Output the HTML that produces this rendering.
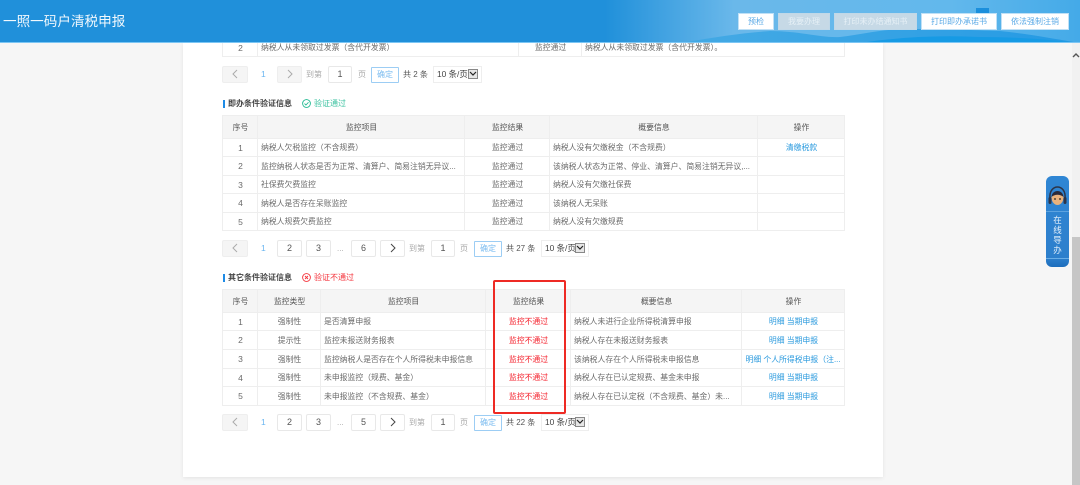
<!DOCTYPE html>
<html lang="zh-CN">
<head>
<meta charset="utf-8">
<title>一照一码户清税申报</title>
<style>
*{box-sizing:border-box}
html,body{margin:0;padding:0;width:1080px;height:485px;overflow:hidden;background:#f6f6f6}
body{position:relative;font-family:"Liberation Sans","Noto Sans CJK SC",sans-serif;font-size:8px;color:#666}
body>*{filter:blur(.3px)}
.a{position:absolute}
#panel{left:183px;top:43px;width:700px;height:434px;background:#fff;box-shadow:0 1px 4px rgba(0,0,0,.08)}
#head{left:0;top:0;width:1080px;height:43px;overflow:hidden;border-bottom:1px solid #7cc6f4}
#title{left:3px;top:13px;font-size:13.6px;line-height:18px;color:#f1f8fd;white-space:nowrap}
.btn{top:13px;height:17px;background:#fff;border:1px solid #bfe0f6;color:#5aa9e6;font-size:8px;line-height:15px;text-align:center;white-space:nowrap}
.btn.d{background:#c6d9e6;border-color:#c0d8e8;color:#e6f0f6}
table{position:absolute;left:222px;width:622px;border-collapse:collapse;table-layout:fixed;background:#fff}
td,th{border:1px solid #eeeeee;padding:0 2px 0 3px;font-weight:normal;text-align:center;white-space:nowrap;overflow:hidden;color:#6a6a6a;font-size:7.85px}
th{background:#f5f5f5;color:#555}
td.l{text-align:left}
td.r{color:#f4222d}
td.o{color:#2a9ade}
.n{font-size:8.5px}
.pg{top:0;height:17px;background:#fff;border:1px solid #e8e8e8;border-radius:2px;text-align:center;line-height:15px;font-size:9px;color:#555}
.pg.x{background:#f5f5f5;border-color:#eeeeee;color:#aaa}
.t{white-space:nowrap;font-size:8px;line-height:17px;top:0}
.g{color:#aaa}
.cur{color:#6ab6f0;font-size:8.5px}
.ok{height:16px;top:1px;border:1px solid #9ccdf4;background:#fff;color:#7dbdf0;font-size:8px;line-height:14px;text-align:center;border-radius:1px}
.sel{top:0;height:17px;background:#fff;border:1px solid #eeeeee;font-size:8.4px;line-height:15px;padding-left:3px;color:#444;white-space:nowrap}
.sel i{position:absolute;right:3px;top:2px;width:10px;height:10px;background:#e6e6e6;border:1px solid #888}
.sel svg{position:absolute;left:0;top:1px}
.pager{left:0;width:1080px;height:17px}
.sec{white-space:nowrap;font-size:8px;line-height:12px;font-weight:bold;color:#444}
.bar{width:2px;height:8px;background:#1e8be6}
</style>
</head>
<body>
<div class="a" id="panel"></div>

<table style="top:38px;height:19px">
<colgroup><col style="width:35px"><col style="width:261px"><col style="width:63px"><col style="width:263px"></colgroup>
<tr><td class="n">2</td><td class="l">纳税人从未领取过发票（含代开发票）</td><td>监控通过</td><td class="l">纳税人从未领取过发票（含代开发票）。</td></tr>
</table>

<div class="a pager" style="top:66px">
<div class="a pg x" style="left:222px;width:26px"><svg width="8" height="10" viewBox="0 0 8 10" style="margin-top:2px"><path d="M6 1L2 5l4 4" fill="none" stroke="#aaa"/></svg></div>
<div class="a t cur" style="left:261px">1</div>
<div class="a pg x" style="left:277px;width:25px"><svg width="8" height="10" viewBox="0 0 8 10" style="margin-top:2px"><path d="M2 1l4 4-4 4" fill="none" stroke="#aaa"/></svg></div>
<div class="a t g" style="left:306px">到第</div>
<div class="a pg" style="left:328px;width:24px">1</div>
<div class="a t g" style="left:358px">页</div>
<div class="a ok" style="left:371px;width:28px">确定</div>
<div class="a t" style="left:403px;color:#555">共 2 条</div>
<div class="a sel" style="left:433px;width:49px">10 条/页<i><svg width="8" height="6" viewBox="0 0 8 6"><path d="M1 1l3 3 3-3" fill="none" stroke="#222" stroke-width="1.2"/></svg></i></div>
</div>

<div class="a bar" style="left:223px;top:100px"></div>
<div class="a sec" style="left:228px;top:98px">即办条件验证信息</div>
<svg class="a" style="left:302px;top:99px" width="9" height="9" viewBox="0 0 9 9"><circle cx="4.5" cy="4.5" r="3.9" fill="none" stroke="#1fb88f" stroke-width=".9"/><path d="M2.5 4.6l1.400 1.400 2.600-2.700" fill="none" stroke="#1fb88f" stroke-width=".9"/></svg>
<div class="a" style="left:314px;top:98px;line-height:12px;font-size:8px;color:#3cc2a0;white-space:nowrap">验证通过</div>

<table style="top:115px;height:115px">
<colgroup><col style="width:35px"><col style="width:207px"><col style="width:85px"><col style="width:208px"><col style="width:87px"></colgroup>
<tr style="height:23px"><th>序号</th><th>监控项目</th><th>监控结果</th><th>概要信息</th><th>操作</th></tr>
<tr style="height:18px"><td class="n">1</td><td class="l">纳税人欠税监控（不含规费）</td><td>监控通过</td><td class="l">纳税人没有欠缴税金（不含规费）</td><td class="o">清缴税款</td></tr>
<tr style="height:19px"><td class="n">2</td><td class="l">监控纳税人状态是否为正常、清算户、简易注销无异议...</td><td>监控通过</td><td class="l">该纳税人状态为正常、停业、清算户、简易注销无异议,...</td><td></td></tr>
<tr style="height:18px"><td class="n">3</td><td class="l">社保费欠费监控</td><td>监控通过</td><td class="l">纳税人没有欠缴社保费</td><td></td></tr>
<tr style="height:19px"><td class="n">4</td><td class="l">纳税人是否存在呆账监控</td><td>监控通过</td><td class="l">该纳税人无呆账</td><td></td></tr>
<tr style="height:18px"><td class="n">5</td><td class="l">纳税人规费欠费监控</td><td>监控通过</td><td class="l">纳税人没有欠缴规费</td><td></td></tr>
</table>

<div class="a pager" style="top:240px">
<div class="a pg x" style="left:222px;width:26px"><svg width="8" height="10" viewBox="0 0 8 10" style="margin-top:2px"><path d="M6 1L2 5l4 4" fill="none" stroke="#aaa"/></svg></div>
<div class="a t cur" style="left:261px">1</div>
<div class="a pg" style="left:277px;width:25px">2</div>
<div class="a pg" style="left:306px;width:25px">3</div>
<div class="a t g" style="left:337px">...</div>
<div class="a pg" style="left:351px;width:25px">6</div>
<div class="a pg" style="left:380px;width:25px"><svg width="8" height="10" viewBox="0 0 8 10" style="margin-top:2px"><path d="M2 1l4 4-4 4" fill="none" stroke="#444"/></svg></div>
<div class="a t g" style="left:409px">到第</div>
<div class="a pg" style="left:431px;width:24px">1</div>
<div class="a t g" style="left:460px">页</div>
<div class="a ok" style="left:474px;width:28px">确定</div>
<div class="a t" style="left:506px;color:#555">共 27 条</div>
<div class="a sel" style="left:541px;width:48px">10 条/页<i><svg width="8" height="6" viewBox="0 0 8 6"><path d="M1 1l3 3 3-3" fill="none" stroke="#222" stroke-width="1.2"/></svg></i></div>
</div>

<div class="a bar" style="left:223px;top:274px"></div>
<div class="a sec" style="left:228px;top:272px">其它条件验证信息</div>
<svg class="a" style="left:302px;top:273px" width="9" height="9" viewBox="0 0 9 9"><circle cx="4.5" cy="4.5" r="3.9" fill="none" stroke="#f4343c" stroke-width=".9"/><path d="M3 3l3 3M6 3L3 6" fill="none" stroke="#f4343c" stroke-width=".9"/></svg>
<div class="a" style="left:314px;top:272px;line-height:12px;font-size:8px;color:#f4343c;white-space:nowrap">验证不通过</div>

<table style="top:289px;height:116px">
<colgroup><col style="width:35px"><col style="width:63px"><col style="width:165px"><col style="width:85px"><col style="width:171px"><col style="width:103px"></colgroup>
<tr style="height:23px"><th>序号</th><th>监控类型</th><th>监控项目</th><th>监控结果</th><th>概要信息</th><th>操作</th></tr>
<tr style="height:18px"><td class="n">1</td><td>强制性</td><td class="l">是否清算申报</td><td class="r">监控不通过</td><td class="l">纳税人未进行企业所得税清算申报</td><td class="o">明细 当期申报</td></tr>
<tr style="height:19px"><td class="n">2</td><td>提示性</td><td class="l">监控未报送财务报表</td><td class="r">监控不通过</td><td class="l">纳税人存在未报送财务报表</td><td class="o">明细 当期申报</td></tr>
<tr style="height:19px"><td class="n">3</td><td>强制性</td><td class="l">监控纳税人是否存在个人所得税未申报信息</td><td class="r">监控不通过</td><td class="l">该纳税人存在个人所得税未申报信息</td><td class="o" style="padding:0 1px">明细 个人所得税申报（注...</td></tr>
<tr style="height:18px"><td class="n">4</td><td>强制性</td><td class="l">未申报监控（规费、基金）</td><td class="r">监控不通过</td><td class="l">纳税人存在已认定规费、基金未申报</td><td class="o">明细 当期申报</td></tr>
<tr style="height:19px"><td class="n">5</td><td>强制性</td><td class="l">未申报监控（不含规费、基金）</td><td class="r">监控不通过</td><td class="l">纳税人存在已认定税（不含规费、基金）未...</td><td class="o">明细 当期申报</td></tr>
</table>

<div class="a" style="left:493px;top:280px;width:73px;height:134px;border:2px solid #ee2a24;border-radius:2px"></div>

<div class="a pager" style="top:414px">
<div class="a pg x" style="left:222px;width:26px"><svg width="8" height="10" viewBox="0 0 8 10" style="margin-top:2px"><path d="M6 1L2 5l4 4" fill="none" stroke="#aaa"/></svg></div>
<div class="a t cur" style="left:261px">1</div>
<div class="a pg" style="left:277px;width:25px">2</div>
<div class="a pg" style="left:306px;width:25px">3</div>
<div class="a t g" style="left:337px">...</div>
<div class="a pg" style="left:351px;width:25px">5</div>
<div class="a pg" style="left:380px;width:25px"><svg width="8" height="10" viewBox="0 0 8 10" style="margin-top:2px"><path d="M2 1l4 4-4 4" fill="none" stroke="#444"/></svg></div>
<div class="a t g" style="left:409px">到第</div>
<div class="a pg" style="left:431px;width:24px">1</div>
<div class="a t g" style="left:460px">页</div>
<div class="a ok" style="left:474px;width:28px">确定</div>
<div class="a t" style="left:506px;color:#555">共 22 条</div>
<div class="a sel" style="left:541px;width:48px">10 条/页<i><svg width="8" height="6" viewBox="0 0 8 6"><path d="M1 1l3 3 3-3" fill="none" stroke="#222" stroke-width="1.2"/></svg></i></div>
</div>

<div class="a" id="head">
<svg class="a" style="left:0;top:0" width="1080" height="43" viewBox="0 0 1080 43" preserveAspectRatio="none">
<defs>
<linearGradient id="hg" x1="0" y1="0" x2="1" y2="0">
<stop offset="0" stop-color="#2090da"/><stop offset=".56" stop-color="#2090da"/><stop offset=".68" stop-color="#6ab8ea"/><stop offset=".88" stop-color="#62b8ec"/><stop offset="1" stop-color="#44aae8"/>
</linearGradient>
<linearGradient id="hw" x1="0" y1="0" x2="1" y2="0">
<stop offset="0" stop-color="#3fa8e4"/><stop offset="1" stop-color="#1d96e2"/>
</linearGradient>
</defs>
<rect width="1080" height="43" fill="url(#hg)"/>
<path d="M680 43C710 38 740 33 770 31c30 0 50 7 70 6 25-3 40-8 70-8 40 0 60 1 90 2 30 3 55 8 80 12z" fill="url(#hw)" opacity=".85"/>
<path d="M860 43c40-6 80-8 120-6 40 0 70 3 100 6z" fill="#169ae4"/>
<rect x="976" y="8" width="13" height="7" fill="#1b8fdc"/>
</svg>
<div class="a" id="title">一照一码户清税申报</div>
<div class="a btn" style="left:738px;width:36px">预检</div>
<div class="a btn d" style="left:778px;width:52px">我要办理</div>
<div class="a btn d" style="left:834px;width:83px">打印未办结通知书</div>
<div class="a btn" style="left:921px;width:76px">打印即办承诺书</div>
<div class="a btn" style="left:1001px;width:68px">依法强制注销</div>
</div>

<div class="a" style="left:1072px;top:43px;width:8px;height:442px;background:#f1f1f1"></div>
<div class="a" style="left:1072px;top:237px;width:8px;height:248px;background:#c6c6c6"></div>
<svg class="a" style="left:1072px;top:52px" width="8" height="6" viewBox="0 0 8 6"><path d="M1 5l3-3 3 3" fill="none" stroke="#555" stroke-width="1.4"/></svg>

<div class="a" style="left:1046px;top:176px;width:23px;height:91px;border-radius:6px;background:linear-gradient(#2f86d4,#2d7fcc 90%,#1c6dbc)">
<div class="a" style="left:0;top:35px;width:23px;height:1px;background:#5da3e0"></div>
<div class="a" style="left:0;top:82px;width:23px;height:1px;background:#6aaee6"></div>
<svg class="a" style="left:1px;top:9px" width="21" height="23" viewBox="0 0 21 23">
<path d="M3 14C2 5 7 2 10.500 2S19 5 18 14" fill="none" stroke="#2c3448" stroke-width="1.500"/>
<rect x="1.500" y="12" width="3" height="7" rx="1.500" fill="#2c3448"/><rect x="16.500" y="12" width="3" height="7" rx="1.500" fill="#2c3448"/>
<path d="M4.500 12C5 5 16 5 16.500 12c0 5-3 8-6 8s-6-3-6-8z" fill="#eab27c"/>
<path d="M4.500 12C5 4 16 4 16.500 12c-3-3-9-3-12 0z" fill="#2a2a3a"/>
<circle cx="8" cy="14" r=".9" fill="#222"/><circle cx="13" cy="14" r=".9" fill="#222"/>
</svg>
<div class="a" style="left:0;top:39px;width:23px;text-align:center;color:#e8f2fb;font-size:8.5px;line-height:10px">在<br>线<br>导<br>办</div>
</div>
</body>
</html>
